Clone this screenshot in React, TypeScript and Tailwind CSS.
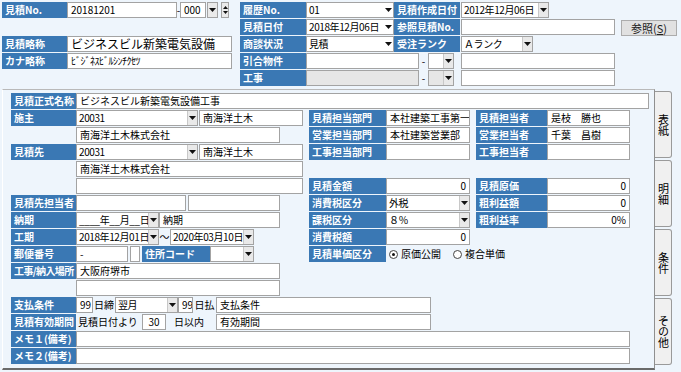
import React from 'react';

const cx = (...c: (string | false | undefined)[]) => c.filter(Boolean).join(' ');

type P = { className?: string; children?: React.ReactNode };

// blue caption cell
const Lbl = ({ className = '', children }: P) => (
  <div
    className={cx(
      'h-full shrink-0 bg-[#3a78b4] text-white font-bold text-[10px] leading-none flex items-center pl-[3px] whitespace-nowrap overflow-hidden',
      className
    )}
  >
    {children}
  </div>
);

// plain text box
const Box = ({
  className = '',
  children,
  right,
  disabled,
}: P & { right?: boolean; disabled?: boolean }) => (
  <div
    className={cx(
      'h-full shrink-0 border border-[#a3a3a3] flex items-center px-[3px] text-[10px] leading-none whitespace-nowrap overflow-hidden',
      disabled ? 'bg-[#e6e6e6]' : 'bg-white',
      right && 'justify-end',
      className
    )}
  >
    {children}
  </div>
);

const Arrow = () => (
  <svg width="7" height="4" viewBox="0 0 7 4">
    <path d="M0 0h7L3.5 4z" fill="#111" />
  </svg>
);

// combo box with drop arrow
const Sel = ({
  className = '',
  children,
  btn,
  disabled,
}: P & { btn?: boolean; disabled?: boolean }) => (
  <div
    className={cx(
      'h-full shrink-0 border border-[#a3a3a3] flex items-stretch text-[10px] leading-none',
      disabled ? 'bg-[#e6e6e6]' : 'bg-white',
      className
    )}
  >
    <div className="flex-1 flex items-center pl-[2px] whitespace-nowrap overflow-hidden tracking-[-0.4px]">
      {children}
    </div>
    <div
      className={cx(
        'w-[10px] shrink-0 flex items-center justify-center',
        btn && 'bg-[#e9e9e9] border-l border-[#c8c8c8]'
      )}
    >
      <Arrow />
    </div>
  </div>
);

const Row = ({ className = '', children }: P) => (
  <div className={cx('flex h-4 mt-px first:mt-0', className)}>{children}</div>
);

const Txt = ({ className = '', children }: P) => (
  <div className={cx('h-full shrink-0 flex items-center text-[10px] leading-none whitespace-nowrap', className)}>
    {children}
  </div>
);

const Radio = ({ on, children }: { on?: boolean; children: React.ReactNode }) => (
  <div className="flex items-center gap-[3px] text-[10px] leading-none">
    <span className="w-[9px] h-[9px] rounded-full border border-[#444] bg-white flex items-center justify-center">
      {on && <span className="w-[3px] h-[3px] rounded-full bg-[#111]" />}
    </span>
    {children}
  </div>
);

// right hand pair of caption/value columns in the lower panel
const RightCols = ({
  a,
  av,
  b,
  bv,
}: {
  a?: string;
  av?: React.ReactNode;
  b?: string;
  bv?: React.ReactNode;
}) => (
  <div className="flex h-full">
    {a && (
      <>
        <Lbl className="w-[77px]">{a}</Lbl>
        {av}
      </>
    )}
    {b && (
      <>
        <Lbl className="w-[71px] ml-[6px]">{b}</Lbl>
        {bv}
      </>
    )}
  </div>
);

const Tab = ({ children, first }: { children: string; first?: boolean }) => (
  <div
    className={cx(
      'h-[67px] w-[17px] bg-[#f0f0f0] border border-l-0 border-[#9a9a9a] rounded-r-[3px] flex items-center justify-center text-[11px] text-black',
      first ? '' : 'mt-[2px]'
    )}
  >
    <span className="[writing-mode:vertical-rl] leading-none">{children}</span>
  </div>
);

const App: React.FC = () => {
  return (
    <div className="w-[681px] h-[372px] overflow-hidden bg-[#eef5fc] text-black font-['Noto_Sans_CJK_JP','Noto_Sans',sans-serif]">
      {/* header block */}
      <div className="pt-[2px]">
        <Row>
          <div className="w-[240px] shrink-0 flex pl-[2px]">
            <Lbl className="w-[65px]">見積No.</Lbl>
            <Box className="w-[110px]">20181201</Box>
            <Txt className="w-[3px] justify-center">-</Txt>
            <Box className="w-[26px] px-[2px]">000</Box>
            <div className="w-[11px] ml-px border border-[#a3a3a3] bg-[#eaeaea] flex items-center justify-center">
              <Arrow />
            </div>
            <div className="w-[8px] ml-[3px] border border-[#a3a3a3] bg-[#eaeaea] flex flex-col items-center justify-center gap-[2px]">
              <svg width="5" height="3" viewBox="0 0 5 3">
                <path d="M0 3h5L2.5 0z" fill="#111" />
              </svg>
              <svg width="5" height="3" viewBox="0 0 5 3">
                <path d="M0 0h5L2.5 3z" fill="#111" />
              </svg>
            </div>
          </div>
          <Lbl className="w-[66px]">履歴No.</Lbl>
          <Sel className="w-[88px]">01</Sel>
          <Lbl className="w-[66px]">見積作成日付</Lbl>
          <Sel className="w-[88px] ml-px" btn>
            2012年12月06日
          </Sel>
        </Row>
        <Row>
          <div className="w-[240px] shrink-0" />
          <Lbl className="w-[66px]">見積日付</Lbl>
          <Sel className="w-[88px]">2018年12月06日</Sel>
          <Lbl className="w-[66px]">参照見積No.</Lbl>
          <Box className="w-[154px] ml-px" />
          <button className="w-[56px] h-[16px] ml-[6px] mt-px bg-[#e1e1e1] border border-[#acacac] text-[11px] leading-none text-[#222] flex items-center justify-center">
            参照(<span className="underline">S</span>)
          </button>
        </Row>
        <Row>
          <div className="w-[240px] shrink-0 flex pl-[2px]">
            <Lbl className="w-[65px]">見積略称</Lbl>
            <Box className="w-[165px] text-[12px]">ビジネスビル新築電気設備</Box>
          </div>
          <Lbl className="w-[66px]">商談状況</Lbl>
          <Sel className="w-[88px]">見積</Sel>
          <Lbl className="w-[66px]">受注ランク</Lbl>
          <Sel className="w-[72px] ml-px" btn>
            Ａランク
          </Sel>
        </Row>
        <Row>
          <div className="w-[240px] shrink-0 flex pl-[2px]">
            <Lbl className="w-[65px]">カナ略称</Lbl>
            <Box className="w-[165px] tracking-[-0.5px]">ﾋﾞｼﾞﾈｽﾋﾞﾙｼﾝﾁｸｾﾂ</Box>
          </div>
          <Lbl className="w-[66px]">引合物件</Lbl>
          <Box className="w-[113px]" />
          <Txt className="w-[9px] justify-center">-</Txt>
          <Sel className="w-[26px]" btn />
          <Box className="w-[154px] ml-[7px]" />
        </Row>
        <Row>
          <div className="w-[240px] shrink-0" />
          <Lbl className="w-[66px]">工事</Lbl>
          <Box className="w-[113px]" disabled />
          <Txt className="w-[9px] justify-center">-</Txt>
          <Sel className="w-[26px]" btn disabled />
          <Box className="w-[154px] ml-[7px]" />
        </Row>
      </div>

      {/* lower tabbed panel */}
      <div className="flex mt-[3px]">
        <div className="ml-[2px] w-[653px] h-[281px] shrink-0 border-t border-t-[#b9b9b9] border-l border-l-white border-r border-r-[#8f8f8f] border-b-2 border-b-[#6a6a6a] pt-[3px] pl-[8px]">
          <Row>
            <Lbl className="w-[65px]">見積正式名称</Lbl>
            <Box className="w-[573px]">ビジネスビル新築電気設備工事</Box>
          </Row>
          <Row>
            <div className="w-[298px] shrink-0 flex">
              <Lbl className="w-[65px]">施主</Lbl>
              <Sel className="w-[122px]" btn>
                20031
              </Sel>
              <Box className="w-[104px] ml-px">南海洋土木</Box>
            </div>
            <RightCols
              a="見積担当部門"
              av={<Box className="w-[84px]">本社建築工事第一</Box>}
              b="見積担当者"
              bv={<Box className="w-[83px]">是枝　勝也</Box>}
            />
          </Row>
          <Row>
            <div className="w-[298px] shrink-0 flex">
              <div className="w-[65px] shrink-0" />
              <Box className="w-[204px]">南海洋土木株式会社</Box>
            </div>
            <RightCols
              a="営業担当部門"
              av={<Box className="w-[84px]">本社建築営業部</Box>}
              b="営業担当者"
              bv={<Box className="w-[83px]">千葉　昌樹</Box>}
            />
          </Row>
          <Row>
            <div className="w-[298px] shrink-0 flex">
              <Lbl className="w-[65px]">見積先</Lbl>
              <Sel className="w-[122px]" btn>
                20031
              </Sel>
              <Box className="w-[104px] ml-px">南海洋土木</Box>
            </div>
            <RightCols
              a="工事担当部門"
              av={<Box className="w-[84px]" />}
              b="工事担当者"
              bv={<Box className="w-[83px]" />}
            />
          </Row>
          <Row>
            <div className="w-[65px] shrink-0" />
            <Box className="w-[227px]">南海洋土木株式会社</Box>
          </Row>
          <Row>
            <div className="w-[298px] shrink-0 flex">
              <div className="w-[65px] shrink-0" />
              <Box className="w-[227px]" />
            </div>
            <RightCols
              a="見積金額"
              av={<Box className="w-[84px]" right>0</Box>}
              b="見積原価"
              bv={<Box className="w-[83px]" right>0</Box>}
            />
          </Row>
          <Row>
            <div className="w-[298px] shrink-0 flex">
              <Lbl className="w-[65px]">見積先担当者</Lbl>
              <Box className="w-[110px]" />
              <Box className="w-[92px] ml-[2px]" />
            </div>
            <RightCols
              a="消費税区分"
              av={<Sel className="w-[84px]" btn>外税</Sel>}
              b="粗利益額"
              bv={<Box className="w-[83px]" right>0</Box>}
            />
          </Row>
          <Row>
            <div className="w-[298px] shrink-0 flex">
              <Lbl className="w-[65px]">納期</Lbl>
              <Sel className="w-[83px]" btn>
                ____年__月__日
              </Sel>
              <Box className="w-[121px] px-[1px]">納期</Box>
            </div>
            <RightCols
              a="課税区分"
              av={<Sel className="w-[84px]" btn>８％</Sel>}
              b="粗利益率"
              bv={<Box className="w-[83px]" right>0%</Box>}
            />
          </Row>
          <Row>
            <div className="w-[298px] shrink-0 flex">
              <Lbl className="w-[65px]">工期</Lbl>
              <Sel className="w-[83px]" btn>
                2018年12月01日
              </Sel>
              <Txt className="w-[11px] justify-center">～</Txt>
              <Sel className="w-[84px]" btn>
                2020年03月10日
              </Sel>
            </div>
            <RightCols a="消費税額" av={<Box className="w-[84px]" right>0</Box>} />
          </Row>
          <Row>
            <div className="w-[298px] shrink-0 flex">
              <Lbl className="w-[65px]">郵便番号</Lbl>
              <Box className="w-[52px]">-</Box>
              <Box className="w-[10px] ml-[2px] bg-[#f4f8fc]" />
              <Lbl className="w-[68px] ml-[2px]">住所コード</Lbl>
              <Sel className="w-[44px]" btn />
            </div>
            <RightCols
              a="見積単価区分"
              av={
                <div className="flex items-center h-full pl-[3px] gap-[12px]">
                  <Radio on>原価公開</Radio>
                  <Radio>複合単価</Radio>
                </div>
              }
            />
          </Row>
          <Row>
            <Lbl className="w-[65px] pl-[1px] tracking-[-0.6px]">工事/納入場所</Lbl>
            <Box className="w-[204px]">大阪府堺市</Box>
          </Row>
          <Row>
            <div className="w-[65px] shrink-0" />
            <Box className="w-[204px]" />
          </Row>
          <Row>
            <Lbl className="w-[65px]">支払条件</Lbl>
            <Box className="w-[17px] px-[2px]">99</Box>
            <Txt className="w-[22px] justify-center">日締</Txt>
            <Sel className="w-[63px]" btn>
              翌月
            </Sel>
            <Box className="w-[15px] px-[1px]">99</Box>
            <Txt className="w-[23px] justify-center">日払</Txt>
            <Box className="w-[215px]">支払条件</Box>
          </Row>
          <Row>
            <Lbl className="w-[65px]">見積有効期間</Lbl>
            <Txt className="w-[66px] pl-[2px]">見積日付より</Txt>
            <Box className="w-[24px] justify-center">30</Box>
            <Txt className="w-[50px] pl-[8px]">日以内</Txt>
            <Box className="w-[215px]">有効期間</Box>
          </Row>
          <Row>
            <Lbl className="w-[65px]">メモ１(備考)</Lbl>
            <Box className="w-[554px]" />
          </Row>
          <Row>
            <Lbl className="w-[65px]">メモ２(備考)</Lbl>
            <Box className="w-[554px]" />
          </Row>
        </div>

        {/* side tabs */}
        <div className="pt-[2px] flex flex-col">
          <Tab first>表紙</Tab>
          <Tab>明細</Tab>
          <Tab>条件</Tab>
          <Tab>その他</Tab>
        </div>
      </div>
    </div>
  );
};

export default App;
